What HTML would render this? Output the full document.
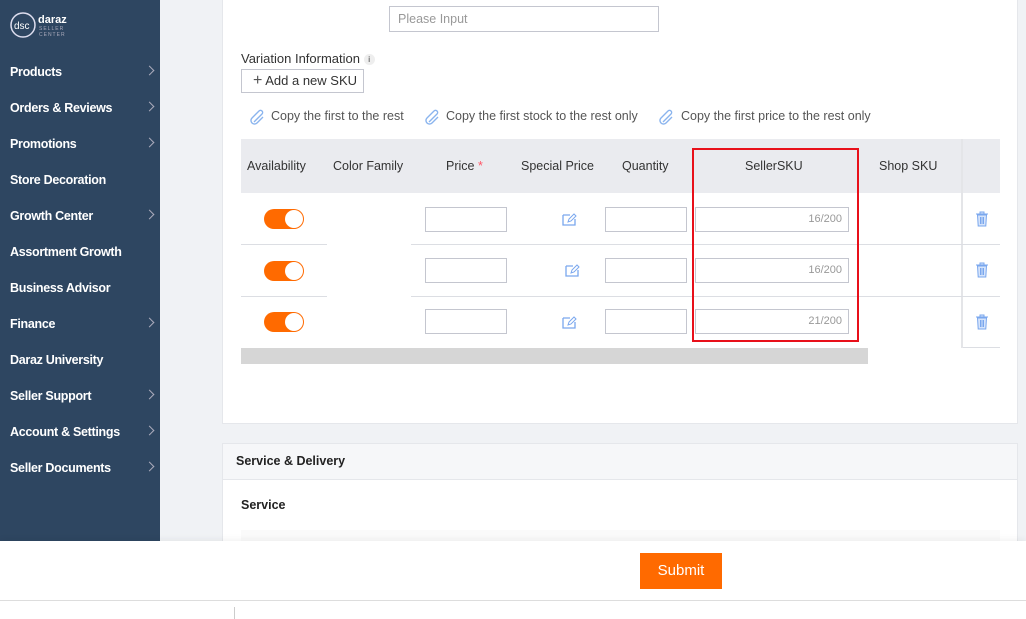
<!DOCTYPE html><html><head><meta charset="utf-8"><style>
*{box-sizing:border-box;margin:0;padding:0}
body{width:1026px;height:619px;overflow:hidden;position:relative;background:#f0f2f5;font-family:"Liberation Sans",sans-serif;font-size:13px;color:#333}
.a{position:absolute;white-space:nowrap}
.sb{left:0;top:0;width:160px;height:541px;background:#2e4661}
.mi{position:absolute;left:10px;color:#fff;font-weight:bold;font-size:12.5px;letter-spacing:-.3px}
.ch{position:absolute;left:146px;width:7px;height:7px;border-top:1.3px solid #aab;border-right:1.3px solid #aab;transform:rotate(45deg)}
.inp{position:absolute;border:1px solid #c4c6cf;background:#fff;height:25px;white-space:nowrap}
.tg{position:absolute;left:264px;width:40px;height:20px;border-radius:10px;background:#ff6a00}
.tg:after{content:"";position:absolute;right:1px;top:1px;width:18px;height:18px;border-radius:9px;background:#fff}
.th{position:absolute;top:159px;font-size:12.5px;color:#333;white-space:nowrap}
.cnt{position:absolute;right:6px;top:5px;font-size:11px;color:#999}
.hl{position:absolute;height:1px;background:#dcdee3}
.cp{position:absolute;top:109px;font-size:12.5px;color:#555;white-space:nowrap}
</style></head><body>
<div class="a sb"></div>
<svg class="a" style="left:10px;top:12px" width="65" height="28"><circle cx="13" cy="13" r="12" fill="none" stroke="#dde" stroke-width="1.5"/><text x="4" y="17" fill="#fff" font-size="10" font-family="Liberation Sans">dsc</text><text x="28" y="11" fill="#fff" font-size="11" font-weight="bold" font-family="Liberation Sans">daraz</text><text x="29" y="18" fill="#aab" font-size="5" font-family="Liberation Sans" letter-spacing="1">SELLER</text><text x="29" y="24" fill="#aab" font-size="5" font-family="Liberation Sans" letter-spacing="1">CENTER</text></svg>
<div class="mi" style="top:65px">Products</div><div class="ch" style="top:67px"></div>
<div class="mi" style="top:101px">Orders &amp; Reviews</div><div class="ch" style="top:103px"></div>
<div class="mi" style="top:137px">Promotions</div><div class="ch" style="top:139px"></div>
<div class="mi" style="top:173px">Store Decoration</div>
<div class="mi" style="top:209px">Growth Center</div><div class="ch" style="top:211px"></div>
<div class="mi" style="top:245px">Assortment Growth</div>
<div class="mi" style="top:281px">Business Advisor</div>
<div class="mi" style="top:317px">Finance</div><div class="ch" style="top:319px"></div>
<div class="mi" style="top:353px">Daraz University</div>
<div class="mi" style="top:389px">Seller Support</div><div class="ch" style="top:391px"></div>
<div class="mi" style="top:425px">Account &amp; Settings</div><div class="ch" style="top:427px"></div>
<div class="mi" style="top:461px">Seller Documents</div><div class="ch" style="top:463px"></div>

<div class="a" style="left:222px;top:0;width:796px;height:424px;background:#fff;border:1px solid #e5e7eb;border-top:none"></div>
<div class="a" style="left:1018px;top:0;width:8px;height:541px;background:#f0f2f5"></div>
<div class="inp" style="left:389px;top:6px;width:270px;height:26px;padding:5px 8px;color:#999;font-size:12.5px">Please Input</div>
<div class="a" style="left:241px;top:51px;font-size:13px">Variation Information <span style="display:inline-block;width:11px;height:11px;border-radius:6px;background:#eee;font-size:8px;text-align:center;line-height:11px;vertical-align:1px">i</span></div>
<div class="inp" style="left:241px;top:69px;width:123px;height:24px;padding:3px 0 0 11px;font-size:13px"><span style="font-size:16px;line-height:14px;color:#555">+</span> Add a new SKU</div>
<svg class="a" style="left:250px;top:109px" width="16" height="16"><path d="M4 13L12 5a2 2 0 0 0-3-3L2 9a3.5 3.5 0 0 0 5 5l6-6" fill="none" stroke="#8ab4ee" stroke-width="1.4"/></svg>
<div class="cp" style="left:271px">Copy the first to the rest</div>
<svg class="a" style="left:425px;top:109px" width="16" height="16"><path d="M4 13L12 5a2 2 0 0 0-3-3L2 9a3.5 3.5 0 0 0 5 5l6-6" fill="none" stroke="#8ab4ee" stroke-width="1.4"/></svg>
<div class="cp" style="left:446px">Copy the first stock to the rest only</div>
<svg class="a" style="left:659px;top:109px" width="16" height="16"><path d="M4 13L12 5a2 2 0 0 0-3-3L2 9a3.5 3.5 0 0 0 5 5l6-6" fill="none" stroke="#8ab4ee" stroke-width="1.4"/></svg>
<div class="cp" style="left:681px">Copy the first price to the rest only</div>

<div class="a" style="left:241px;top:139px;width:759px;height:54px;background:#eaebef"></div>
<div class="th" style="left:247px">Availability</div>
<div class="th" style="left:333px">Color Family</div>
<div class="th" style="left:446px">Price <span style="color:#f56">*</span></div>
<div class="th" style="left:521px">Special Price</div>
<div class="th" style="left:622px">Quantity</div>
<div class="th" style="left:745px">SellerSKU</div>
<div class="th" style="left:879px">Shop SKU</div>
<div class="a" style="left:961px;top:139px;width:2px;height:209px;background:#e4e5e8"></div>

<div class="hl" style="left:241px;top:244px;width:86px"></div><div class="hl" style="left:411px;top:244px;width:589px"></div>
<div class="hl" style="left:241px;top:296px;width:86px"></div><div class="hl" style="left:411px;top:296px;width:589px"></div>
<div class="hl" style="left:963px;top:347px;width:37px"></div>

<div class="tg" style="top:209px"></div><div class="tg" style="top:261px"></div><div class="tg" style="top:312px"></div>
<div class="inp" style="left:425px;top:207px;width:82px"></div><div class="inp" style="left:425px;top:258px;width:82px"></div><div class="inp" style="left:425px;top:309px;width:82px"></div>
<div class="inp" style="left:605px;top:207px;width:82px"></div><div class="inp" style="left:605px;top:258px;width:82px"></div><div class="inp" style="left:605px;top:309px;width:82px"></div>
<div class="inp" style="left:695px;top:207px;width:154px"><span class="cnt">16/200</span></div>
<div class="inp" style="left:695px;top:258px;width:154px"><span class="cnt">16/200</span></div>
<div class="inp" style="left:695px;top:309px;width:154px"><span class="cnt">21/200</span></div>
<svg class="a" style="left:561px;top:211px" width="16" height="16"><path d="M2 4h7M2 4v10h12V8" fill="none" stroke="#7aa7ee" stroke-width="1.3"/><path d="M7 11l1-3 5-5 2 2-5 5z" fill="none" stroke="#7aa7ee"/></svg>
<svg class="a" style="left:564px;top:262px" width="16" height="16"><path d="M2 4h7M2 4v10h12V8" fill="none" stroke="#7aa7ee" stroke-width="1.3"/><path d="M7 11l1-3 5-5 2 2-5 5z" fill="none" stroke="#7aa7ee"/></svg>
<svg class="a" style="left:561px;top:314px" width="16" height="16"><path d="M2 4h7M2 4v10h12V8" fill="none" stroke="#7aa7ee" stroke-width="1.3"/><path d="M7 11l1-3 5-5 2 2-5 5z" fill="none" stroke="#7aa7ee"/></svg>
<svg class="a" style="left:975px;top:211px" width="14" height="16"><path d="M1 3h12M5 3V1h4v2M2.5 4h9l-.7 11H3.2z" fill="#d6e4fb" stroke="#7aa7ee"/><path d="M5.5 6v7M7 6v7M8.5 6v7" stroke="#7aa7ee"/></svg>
<svg class="a" style="left:975px;top:262px" width="14" height="16"><path d="M1 3h12M5 3V1h4v2M2.5 4h9l-.7 11H3.2z" fill="#d6e4fb" stroke="#7aa7ee"/><path d="M5.5 6v7M7 6v7M8.5 6v7" stroke="#7aa7ee"/></svg>
<svg class="a" style="left:975px;top:314px" width="14" height="16"><path d="M1 3h12M5 3V1h4v2M2.5 4h9l-.7 11H3.2z" fill="#d6e4fb" stroke="#7aa7ee"/><path d="M5.5 6v7M7 6v7M8.5 6v7" stroke="#7aa7ee"/></svg>
<div class="a" style="left:241px;top:348px;width:627px;height:16px;background:#d6d6d6"></div>
<div class="a" style="left:692px;top:148px;width:167px;height:194px;border:2px solid #e8101a"></div>

<div class="a" style="left:222px;top:443px;width:796px;height:110px;background:#fff;border:1px solid #e5e7eb"></div>
<div class="a" style="left:223px;top:444px;width:794px;height:36px;background:#f6f7f9;border-bottom:1px solid #e5e7eb"></div>
<div class="a" style="left:236px;top:454px;font-weight:bold;font-size:12.5px;color:#222">Service &amp; Delivery</div>
<div class="a" style="left:241px;top:498px;font-weight:bold;font-size:12.5px;color:#222">Service</div>
<div class="a" style="left:241px;top:530px;width:759px;height:12px;background:#fafafa"></div>

<div class="a" style="left:0;top:541px;width:1026px;height:59px;background:#fff;box-shadow:0 -2px 6px rgba(0,0,0,.05)"></div>
<div class="a" style="left:640px;top:553px;width:82px;height:36px;background:#ff6a00;color:#fff;font-size:15px;text-align:center;line-height:36px">Submit</div>
<div class="a" style="left:0;top:600px;width:1026px;height:19px;background:#fff;border-top:1px solid #ddd"></div>
<div class="a" style="left:234px;top:607px;width:1px;height:12px;background:#ccc"></div>
</body></html>
